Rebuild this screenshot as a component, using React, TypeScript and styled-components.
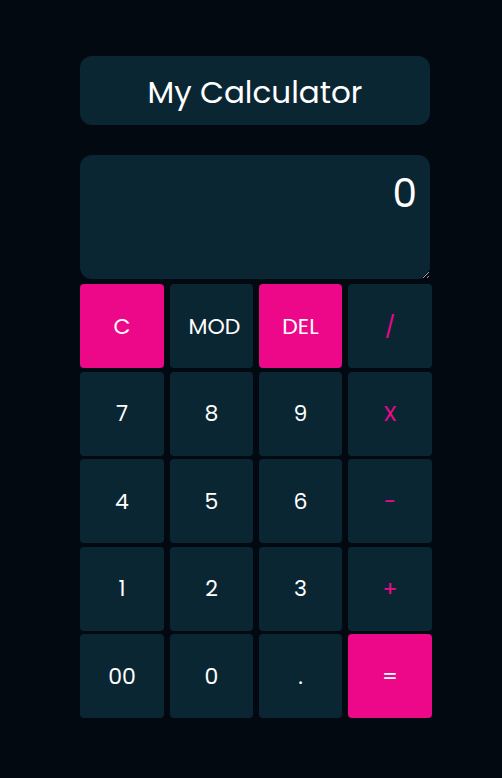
import React from 'react'
import styled, { createGlobalStyle } from 'styled-components'

const GlobalStyle = createGlobalStyle`
  html, body {
    margin: 0;
    padding: 0;
    background: #030911;
    font-family: 'Poppins', Inter, 'Open Sans', sans-serif;
  }
`

type Kind = 'num' | 'op' | 'accent'

const keys: { label: string; kind: Kind }[] = [
  { label: 'C', kind: 'accent' },
  { label: '\u00a0MOD', kind: 'num' },
  { label: 'DEL', kind: 'accent' },
  { label: '/', kind: 'op' },
  { label: '7', kind: 'num' },
  { label: '8', kind: 'num' },
  { label: '9', kind: 'num' },
  { label: 'X', kind: 'op' },
  { label: '4', kind: 'num' },
  { label: '5', kind: 'num' },
  { label: '6', kind: 'num' },
  { label: '-', kind: 'op' },
  { label: '1', kind: 'num' },
  { label: '2', kind: 'num' },
  { label: '3', kind: 'num' },
  { label: '+', kind: 'op' },
  { label: '00', kind: 'num' },
  { label: '0', kind: 'num' },
  { label: '.', kind: 'num' },
  { label: '=', kind: 'accent' },
]

export default function App() {
  return (
    <>
      <GlobalStyle />
      <Page>
        <Calculator>
          <Title>My Calculator</Title>
          <Display readOnly value="0" />
          <Keypad>
            {keys.map((k) => (
              <Key key={k.label} kind={k.kind}>
                {k.label}
              </Key>
            ))}
          </Keypad>
        </Calculator>
      </Page>
    </>
  )
}

const Page = styled.div`
  min-height: 778px;
  padding: 56px 0 0 80px;
  box-sizing: border-box;
`

const Calculator = styled.div`
  width: 352px;
  display: flex;
  flex-direction: column;
`

const Title = styled.h1`
  width: 350px;
  height: 69px;
  box-sizing: border-box;
  padding-top: 3px;
  margin: 0 0 30px;
  border-radius: 12px;
  background: #0b2633;
  color: #ffffff;
  font-size: 31px;
  font-weight: 400;
  display: flex;
  align-items: center;
  justify-content: center;
`

const Display = styled.textarea`
  width: 350px;
  height: 124px;
  box-sizing: border-box;
  margin: 0 0 5px;
  padding: 16px 13px 16px 14px;
  border: none;
  outline: none;
  border-radius: 12px;
  background: #0b2633;
  color: #ffffff;
  font-family: inherit;
  font-size: 39px;
  line-height: 1.2;
  text-align: right;
`

const Keypad = styled.div`
  display: grid;
  grid-template-columns: 84px 83px 83px 84px;
  grid-auto-rows: 84px;
  column-gap: 6px;
  row-gap: 3.5px;
`

const Key = styled.button<{ kind: Kind }>`
  border: none;
  border-radius: 4px;
  background: ${({ kind }) => (kind === 'accent' ? '#ec0889' : '#0b2633')};
  color: ${({ kind }) => (kind === 'op' ? '#ec0889' : '#ffffff')};
  font-family: inherit;
  font-size: 22px;
  cursor: pointer;
  display: flex;
  align-items: center;
  justify-content: center;
  padding: 0;
`
